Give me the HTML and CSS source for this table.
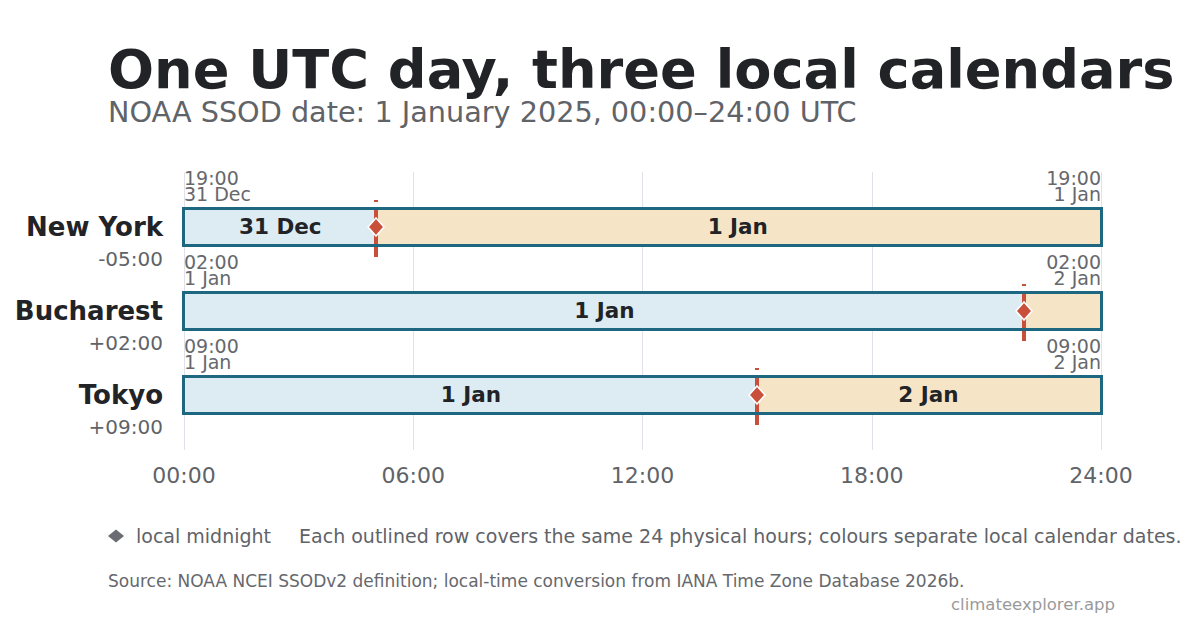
FILE: index.html
```html
<!DOCTYPE html>
<html lang="en">
<head>
<meta charset="utf-8">
<title>One UTC day, three local calendars</title>
<link rel="stylesheet" href="styles.css">
</head>
<body>
<div class="page">
  <header class="head">
    <h1 class="title">One UTC day, three local calendars</h1>
    <p class="subtitle">NOAA SSOD date: 1 January 2025, 00:00–24:00 UTC</p>
  </header>

  <section class="chart">
    <div class="cities">
      <div class="city"><div class="city-name">New York</div><div class="city-offset">-05:00</div></div>
      <div class="city"><div class="city-name">Bucharest</div><div class="city-offset">+02:00</div></div>
      <div class="city"><div class="city-name">Tokyo</div><div class="city-offset">+09:00</div></div>
    </div>

    <div class="plot">
      <div class="row">
        <div class="ends">
          <div class="end">19:00<br>31 Dec</div>
          <div class="end end-right">19:00<br>1 Jan</div>
        </div>
        <div class="bar">
          <div class="track">
            <div class="seg seg-a" style="width:20.8333%">31 Dec</div>
            <div class="seg seg-b" style="width:79.1667%">1 Jan</div>
            <span class="midline" style="left:20.8333%"></span>
            <svg class="diamond" style="left:20.8333%" width="18" height="20" viewBox="0 0 18 20"><polygon points="9,1 17,10 9,19 1,10" /></svg>
          </div>
        </div>
      </div>

      <div class="row">
        <div class="ends">
          <div class="end">02:00<br>1 Jan</div>
          <div class="end end-right">02:00<br>2 Jan</div>
        </div>
        <div class="bar">
          <div class="track">
            <div class="seg seg-a" style="width:91.6667%">1 Jan</div>
            <div class="seg seg-b" style="width:8.3333%"></div>
            <span class="midline" style="left:91.6667%"></span>
            <svg class="diamond" style="left:91.6667%" width="18" height="20" viewBox="0 0 18 20"><polygon points="9,1 17,10 9,19 1,10" /></svg>
          </div>
        </div>
      </div>

      <div class="row">
        <div class="ends">
          <div class="end">09:00<br>1 Jan</div>
          <div class="end end-right">09:00<br>2 Jan</div>
        </div>
        <div class="bar">
          <div class="track">
            <div class="seg seg-a" style="width:62.5%">1 Jan</div>
            <div class="seg seg-b" style="width:37.5%">2 Jan</div>
            <span class="midline" style="left:62.5%"></span>
            <svg class="diamond" style="left:62.5%" width="18" height="20" viewBox="0 0 18 20"><polygon points="9,1 17,10 9,19 1,10" /></svg>
          </div>
        </div>
      </div>
    </div>
  </section>

  <div class="xaxis">
    <span class="tick">00:00</span>
    <span class="tick">06:00</span>
    <span class="tick">12:00</span>
    <span class="tick">18:00</span>
    <span class="tick">24:00</span>
  </div>

  <div class="legend">
    <svg class="legend-mark" width="18" height="14" viewBox="0 0 18 14"><polygon points="9,0.5 17,7 9,13.5 1,7" /></svg>
    <span class="legend-key">local midnight</span>
    <span class="legend-note">Each outlined row covers the same 24 physical hours; colours separate local calendar dates.</span>
  </div>

  <p class="source">Source: NOAA NCEI SSODv2 definition; local-time conversion from IANA Time Zone Database 2026b.</p>
  <p class="credit">climateexplorer.app</p>
</div>
</body>
</html>
```

FILE: styles.css
```css
html, body {
  margin: 0;
  padding: 0;
  background: #ffffff;
}

body {
  font-family: "DejaVu Sans", "Noto Sans", sans-serif;
}

.page {
  width: 1200px;
  height: 630px;
  overflow: hidden;
}

.head {
  padding: 43px 0 0 108px;
}

.title {
  margin: 0;
  font-size: 54.2px;
  line-height: 54px;
  font-weight: bold;
  color: #222326;
  white-space: nowrap;
}

.subtitle {
  margin: 1px 0 0;
  font-size: 28.7px;
  line-height: 28px;
  color: #606368;
  white-space: nowrap;
}

.chart {
  display: flex;
  margin-top: 44px;
}

.cities {
  width: 184px;
  flex-shrink: 0;
}

.city {
  height: 84px;
  box-sizing: border-box;
  padding: 37px 21px 0 0;
  text-align: right;
  white-space: nowrap;
}

.city-name {
  font-size: 26px;
  line-height: 40px;
  font-weight: bold;
  color: #222326;
}

.city-offset {
  font-size: 20px;
  line-height: 24px;
  color: #606368;
}

.plot {
  width: 918px;
  padding-bottom: 28px;
  background-image:
    linear-gradient(#dfe2e8, #dfe2e8),
    linear-gradient(#dfe2e8, #dfe2e8),
    linear-gradient(#dfe2e8, #dfe2e8),
    linear-gradient(#dfe2e8, #dfe2e8),
    linear-gradient(#dfe2e8, #dfe2e8);
  background-size: 1px calc(100% - 2px);
  background-position: 0 2px, 229px 2px, 458px 2px, 688px 2px, 917px 2px;
  background-repeat: no-repeat;
}

.row {
  height: 84px;
}

.ends {
  display: flex;
  justify-content: space-between;
  width: 917px;
  height: 32px;
  margin-bottom: 5px;
  font-size: 19px;
  line-height: 16px;
  color: #66686d;
  white-space: nowrap;
}

.end-right {
  text-align: right;
}

.bar {
  position: relative;
  box-sizing: border-box;
  width: 921px;
  height: 40px;
  margin-left: -2px;
  padding: 3px;
}

.bar::after {
  content: "";
  position: absolute;
  inset: 0;
  border: 3px solid #1d6781;
  z-index: 2;
}

.track {
  position: relative;
  display: flex;
  height: 100%;
}

.seg {
  display: flex;
  align-items: center;
  justify-content: center;
  font-size: 21.5px;
  font-weight: bold;
  color: #222326;
  padding-bottom: 2px;
  box-sizing: border-box;
  white-space: nowrap;
}

.seg-a {
  background: #ddecf3;
}

.seg-b {
  background: #f5e5c6;
}

.midline {
  position: absolute;
  top: -10px;
  bottom: -13px;
  width: 4px;
  margin-left: -2px;
  background: linear-gradient(to bottom, #c8503a 0, #c8503a 2px, transparent 2px, transparent 10px, #c8503a 10px);
  z-index: 1;
}

.diamond {
  position: absolute;
  top: 50%;
  transform: translate(-50%, -50%);
  z-index: 3;
}

.diamond polygon {
  fill: #c8503a;
  stroke: #ffffff;
  stroke-width: 1.6;
}

.xaxis {
  display: flex;
  justify-content: space-between;
  width: 917px;
  margin: 15px 0 0 184px;
  font-size: 22px;
  line-height: 22px;
  color: #606368;
}

.tick {
  width: 0;
  display: flex;
  justify-content: center;
  white-space: nowrap;
}

.legend {
  display: flex;
  align-items: center;
  margin-top: 40px;
  padding-left: 107px;
  font-size: 19px;
  line-height: 18px;
  color: #606368;
  white-space: nowrap;
}

.legend-mark {
  margin-right: 11px;
}

.legend-mark polygon {
  fill: #6a6c71;
}

.legend-key {
  margin-right: 28px;
}

.source {
  margin: 28px 0 0 108px;
  font-size: 17px;
  line-height: 16px;
  color: #66686d;
  white-space: nowrap;
}

.credit {
  margin: 8px 0 0;
  padding-right: 85px;
  text-align: right;
  font-size: 16.5px;
  line-height: 16px;
  color: #9a9a9a;
}
```
